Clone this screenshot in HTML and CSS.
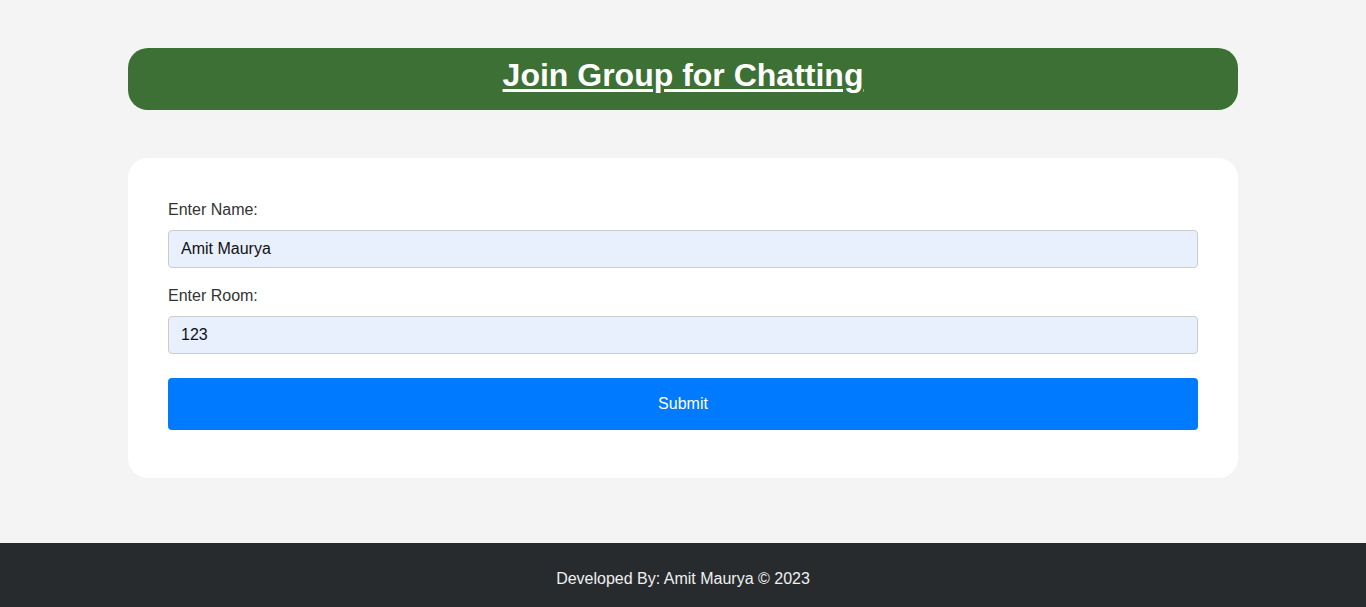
FILE: index.html
```html
<!DOCTYPE html>
<html lang="en">
<head>
<meta charset="utf-8">
<title>Join Group for Chatting</title>
<link rel="stylesheet" href="styles.css">
</head>
<body>
<main class="page">
  <header class="banner">
    <h1 class="banner-title">Join Group for Chatting</h1>
  </header>
  <form class="card">
    <label class="field-label" for="name">Enter Name:</label>
    <input class="field-input" id="name" type="text" value="Amit Maurya">
    <label class="field-label" for="room">Enter Room:</label>
    <input class="field-input" id="room" type="text" value="123">
    <button class="submit-btn" type="button">Submit</button>
  </form>
</main>
<footer class="footer">Developed By: Amit Maurya © 2023</footer>
</body>
</html>
```
FILE: styles.css
```css
* { box-sizing: border-box; }
html, body { margin: 0; padding: 0; }
body {
  background: #f4f4f4;
  font-family: "Liberation Sans", Arial, sans-serif;
  font-size: 16px;
  color: #333;
  min-height: 100vh;
  display: flex;
  flex-direction: column;
}
.page {
  width: 1110px;
  margin: 0 auto;
  padding-top: 48px;
  display: flex;
  flex-direction: column;
  gap: 48px;
}
.banner {
  background: #3d7034;
  border-radius: 20px;
  height: 62px;
  display: flex;
  align-items: center;
  justify-content: center;
}
.banner-title {
  margin: 0;
  color: #fff;
  font-size: 32px;
  font-weight: 700;
  text-decoration: underline;
  text-underline-offset: 3px;
  line-height: 1;
  position: relative;
  top: -4px;
}
.card {
  background: #fff;
  border-radius: 20px;
  padding: 40px 40px 48px;
  display: flex;
  flex-direction: column;
}
.field-label {
  line-height: 24px;
  margin-bottom: 8px;
  color: #333;
}
.field-input {
  height: 38px;
  border: 1px solid #ccc;
  border-radius: 4px;
  background: #e8f0fe;
  padding: 0 12px;
  font-family: inherit;
  font-size: 16px;
  color: #111;
  margin-bottom: 16px;
  outline: none;
}
.submit-btn {
  margin-top: 8px;
  height: 52px;
  border: none;
  border-radius: 4px;
  background: #007bff;
  color: #fff;
  font-family: inherit;
  font-size: 16px;
}
.footer {
  margin-top: auto;
  background: #272b2e;
  color: #f0f0f0;
  height: 64px;
  display: flex;
  align-items: center;
  justify-content: center;
  padding-top: 8px;
}
```
